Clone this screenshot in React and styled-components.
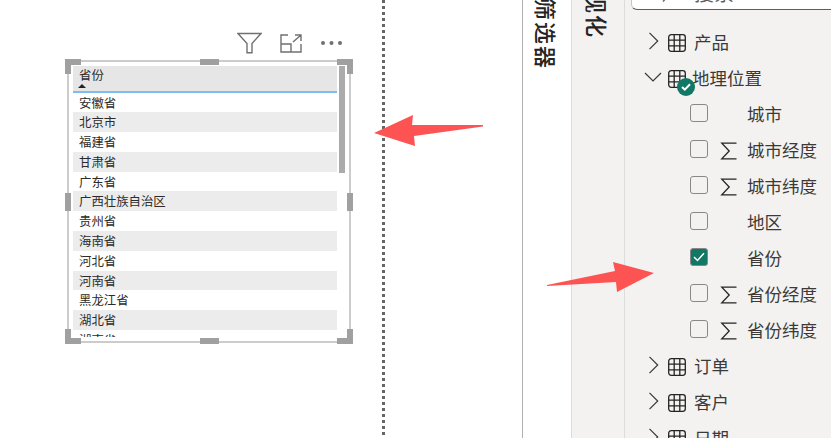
import React from 'react';
import styled, { createGlobalStyle } from 'styled-components';

const GlobalStyle = createGlobalStyle`
  html, body {
    margin: 0;
    padding: 0;
    background: #ffffff;
    overflow: hidden;
  }
  body {
    font-family: "Noto Sans CJK SC", "Noto Sans", sans-serif;
  }
`;

const Page = styled.div`
  position: relative;
  display: flex;
  width: 831px;
  height: 438px;
  overflow: hidden;
  background: #ffffff;
`;

const Canvas = styled.div`
  width: 382px;
  flex: none;
  box-sizing: border-box;
  padding: 30px 0 0 67px;
`;

const DottedLine = styled.div`
  width: 3px;
  flex: none;
  background: repeating-linear-gradient(to bottom, #666666 0 3px, transparent 3px 6px);
`;

const Visual = styled.div`
  width: 284px;
`;

const VisualToolbar = styled.div`
  display: flex;
  justify-content: flex-end;
  align-items: center;
  height: 30px;
  padding: 0 8px 4px 0;
  box-sizing: border-box;
`;

const ToolIcon = styled.svg`
  display: block;
  margin-left: ${(p) => p.$gap || 0}px;
  flex: none;
`;

const Frame = styled.div`
  position: relative;
  height: 283px;
  box-sizing: border-box;
  border: 2px solid #cccccc;
  padding: 4px 0 0 4px;
`;

const Handle = styled.div`
  position: absolute;
  background: #a0a0a0;
  width: ${(p) => p.$w}px;
  height: ${(p) => p.$h}px;
  ${(p) => p.$css}
`;

const Clip = styled.div`
  position: relative;
  width: 272px;
  height: 271px;
  overflow: hidden;
`;

const Table = styled.div`
  width: 264px;
  font-size: 12.4px;
  color: #2b2b2b;
`;

const HeaderCell = styled.div`
  position: relative;
  box-sizing: border-box;
  background: #e6e6e6;
  border-bottom: 2px solid #7fbcf0;
  height: 26.5px;
  padding: 1px 0 0 6px;
  line-height: 16px;
`;

const SortMark = styled.div`
  position: absolute;
  left: 5px;
  top: 18px;
  width: 0;
  height: 0;
  border-left: 4px solid transparent;
  border-right: 4px solid transparent;
  border-bottom: 4px solid #222222;
`;

const Row = styled.div`
  box-sizing: border-box;
  height: 19.8px;
  line-height: 19.8px;
  padding: 1px 0 0 6px;
  background: ${(p) => (p.$alt ? '#ececec' : '#ffffff')};
  white-space: nowrap;
`;

const ScrollThumb = styled.div`
  position: absolute;
  top: 0;
  left: 266px;
  width: 7px;
  height: 107px;
  background: #ababab;
`;

const Panes = styled.div`
  display: flex;
  margin-left: 137px;
  flex: 1;
  min-width: 0;
  border-left: 1px solid #b0b0b0;
`;

const FilterPane = styled.div`
  position: relative;
  width: 48px;
  flex: none;
  background: #ffffff;
  border-right: 1px solid #dcdcdc;
  overflow: hidden;
`;

const VizPane = styled(FilterPane)`
  width: 52px;
  background: #f3f2f1;
`;

const PaneTitle = styled.div`
  writing-mode: vertical-rl;
  text-orientation: sideways;
  font-size: 22px;
  font-weight: 500;
  letter-spacing: 2px;
  line-height: 24px;
  color: #252423;
  white-space: nowrap;
  margin-top: ${(p) => p.$top}px;
  margin-left: ${(p) => p.$left}px;
`;

const FieldPane = styled.div`
  flex: 1;
  min-width: 0;
  background: #f3f2f1;
  overflow: hidden;
`;

const SearchBox = styled.div`
  display: flex;
  align-items: flex-end;
  height: 10px;
  margin-left: 6px;
  box-sizing: border-box;
  background: #ffffff;
  border-left: 1px solid #c8c6c4;
  border-bottom: 1px solid #605e5c;
  border-radius: 0 0 0 6px;
  overflow: hidden;
  padding-left: 30px;
  font-size: 20px;
  line-height: 24px;
  color: #605e5c;
`;

const SearchIcon = styled.svg`
  flex: none;
  display: block;
  width: 18px;
  height: 18px;
  margin: 0 14px 6px 0;
`;

const SearchText = styled.span`
  display: block;
  margin-bottom: 4px;
`;

const FieldList = styled.div`
  padding-top: 13px;
`;

const FieldRow = styled.div`
  display: flex;
  align-items: center;
  height: 36px;
  padding-left: ${(p) => (p.$child ? 65 : 23)}px;
  font-size: 17.5px;
  color: #3b3a39;
  white-space: nowrap;
`;

const Chevron = styled.svg`
  flex: none;
  display: block;
  width: 18px;
  height: 18px;
  margin-left: ${(p) => (p.$open ? -4 : -1)}px;
  margin-right: ${(p) => (p.$open ? 4 : 1)}px;
`;

const TableIconWrap = styled.div`
  position: relative;
  flex: none;
  width: 18px;
  height: 18px;
  margin-left: 2px;
  margin-right: ${(p) => (p.$open ? 6 : 8)}px;
`;

const CheckBadge = styled.div`
  position: absolute;
  left: 9px;
  top: 10px;
  width: 18px;
  height: 18px;
  border-radius: 50%;
  background: #117865;
  display: flex;
  align-items: center;
  justify-content: center;
`;

const Box = styled.div`
  flex: none;
  width: 18px;
  height: 18px;
  box-sizing: border-box;
  border-radius: 3px;
  border: 1px solid #8a8886;
  background: ${(p) => (p.$checked ? '#117865' : 'transparent')};
  display: flex;
  align-items: center;
  justify-content: center;
`;

const SigmaSlot = styled.div`
  flex: none;
  width: 18px;
  height: 18px;
  margin: 0 9px 0 12px;
`;

const Overlay = styled.svg`
  position: absolute;
  left: 0;
  top: 0;
  pointer-events: none;
`;

const provinces = [
  '安徽省', '北京市', '福建省', '甘肃省', '广东省', '广西壮族自治区', '贵州省',
  '海南省', '河北省', '河南省', '黑龙江省', '湖北省', '湖南省',
];

const fields = [
  { name: '产品', type: 'table' },
  { name: '地理位置', type: 'table', open: true },
  { name: '城市' },
  { name: '城市经度', sigma: true },
  { name: '城市纬度', sigma: true },
  { name: '地区' },
  { name: '省份', checked: true },
  { name: '省份经度', sigma: true },
  { name: '省份纬度', sigma: true },
  { name: '订单', type: 'table' },
  { name: '客户', type: 'table' },
  { name: '日期', type: 'table' },
];

const handles = [
  { w: 16, h: 6, css: 'left:-4px;top:-3px;' },
  { w: 6, h: 15, css: 'left:-4px;top:-3px;' },
  { w: 19, h: 6, css: 'left:131px;top:-3px;' },
  { w: 16, h: 6, css: 'right:-4px;top:-3px;' },
  { w: 6, h: 15, css: 'right:-4px;top:-3px;' },
  { w: 6, h: 18, css: 'left:-4px;top:131px;' },
  { w: 6, h: 18, css: 'right:-4px;top:131px;' },
  { w: 16, h: 6, css: 'left:-4px;bottom:-3px;' },
  { w: 6, h: 15, css: 'left:-4px;bottom:-3px;' },
  { w: 19, h: 6, css: 'left:131px;bottom:-3px;' },
  { w: 16, h: 6, css: 'right:-4px;bottom:-3px;' },
  { w: 6, h: 15, css: 'right:-4px;bottom:-3px;' },
];

const GridIcon = () => (
  <svg width="18" height="18" viewBox="0 0 18 18" fill="none" stroke="#252423" strokeWidth="1.3">
    <rect x="0.7" y="0.7" width="16.6" height="16.6" rx="2.5" />
    <path d="M6.2 .7V17.3M11.8 .7V17.3M.7 6.2H17.3M.7 11.8H17.3" />
  </svg>
);

const SigmaIcon = () => (
  <svg width="18" height="18" viewBox="0 0 18 18" fill="none" stroke="#252423" strokeWidth="1.3">
    <path d="M16.5 1.2H1.8L9.2 9 1.8 16.8H16.5" />
  </svg>
);

const FieldItem = ({ field }) => {
  if (field.type === 'table') {
    return (
      <FieldRow>
        <Chevron $open={field.open} viewBox="0 0 18 18" fill="none" stroke="#3b3a39" strokeWidth="1.2">
          {field.open ? <path d="M1 5l8 8 8-8" /> : <path d="M2.5 .8l8.2 8.2-8.2 8.2" />}
        </Chevron>
        <TableIconWrap $open={field.open}>
          <GridIcon />
          {field.open && (
            <CheckBadge>
              <svg width="10" height="8" viewBox="0 0 10 8" fill="none" stroke="#ffffff" strokeWidth="2">
                <path d="M1 4l2.8 2.6L9 1.2" />
              </svg>
            </CheckBadge>
          )}
        </TableIconWrap>
        {field.name}
      </FieldRow>
    );
  }
  return (
    <FieldRow $child>
      <Box $checked={field.checked}>
        {field.checked && (
          <svg width="12" height="10" viewBox="0 0 12 10" fill="none" stroke="#ffffff" strokeWidth="1.5">
            <path d="M1 5l3.5 3.5L11 1.2" />
          </svg>
        )}
      </Box>
      <SigmaSlot>{field.sigma && <SigmaIcon />}</SigmaSlot>
      {field.name}
    </FieldRow>
  );
};

const App = () => (
  <Page>
    <GlobalStyle />
    <Canvas>
      <Visual>
        <VisualToolbar>
          <ToolIcon width="25" height="22" viewBox="0 0 25 22" fill="none" stroke="#707070" strokeWidth="1.4">
            <path d="M1 1.5H24L15 11.5V20.8H10V11.5Z" />
          </ToolIcon>
          <ToolIcon $gap={18} width="22" height="19" viewBox="0 0 22 19" fill="none" stroke="#707070" strokeWidth="1.4">
            <path d="M8 1H1V18H21V10M1 10H11V18M13 8L21 1M15 1H21V7" />
          </ToolIcon>
          <ToolIcon $gap={18} width="23" height="6" viewBox="0 0 23 6" fill="#707070">
            <circle cx="3" cy="3" r="2" />
            <circle cx="11.5" cy="3" r="2" />
            <circle cx="20" cy="3" r="2" />
          </ToolIcon>
        </VisualToolbar>
        <Frame>
          <Clip>
            <Table>
              <HeaderCell>
                省份
                <SortMark />
              </HeaderCell>
              {provinces.map((name, i) => (
                <Row key={name} $alt={i % 2 === 1}>{name}</Row>
              ))}
            </Table>
            <ScrollThumb />
          </Clip>
          {handles.map((h, i) => (
            <Handle key={i} $w={h.w} $h={h.h} $css={h.css} />
          ))}
        </Frame>
      </Visual>
    </Canvas>
    <DottedLine />
    <Panes>
      <FilterPane>
        <PaneTitle $top={-2} $left={12}>筛选器</PaneTitle>
      </FilterPane>
      <VizPane>
        <PaneTitle $top={-9} $left={14}>视化</PaneTitle>
      </VizPane>
      <FieldPane>
        <SearchBox>
          <SearchIcon viewBox="0 0 18 18" fill="none" stroke="#605e5c" strokeWidth="1.3">
            <circle cx="10.5" cy="6.5" r="6" />
            <path d="M6 11L1 16.5" />
          </SearchIcon>
          <SearchText>搜索</SearchText>
        </SearchBox>
        <FieldList>
          {fields.map((f) => (
            <FieldItem key={f.name} field={f} />
          ))}
        </FieldList>
      </FieldPane>
    </Panes>
    <Overlay width="831" height="438" viewBox="0 0 831 438">
      <polygon points="374,133 413,115 412,125 483,125 483,126.5 414,136 415,146" fill="#fd5353" />
      <polygon points="547,285 615,271 613,262 654,273 617,292 616,282 547,286" fill="#fd5353" />
    </Overlay>
  </Page>
);

export default App;
